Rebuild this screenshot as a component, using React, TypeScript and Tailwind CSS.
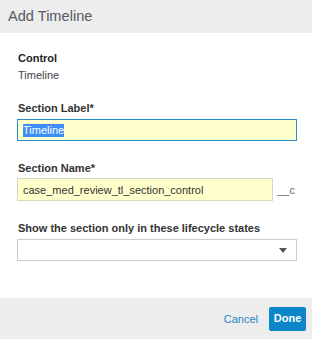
const App = () => {
  return (
    <div className="w-[312px] h-[339px] flex flex-col bg-white font-['Liberation_Sans',Arial,sans-serif]">
      <div className="h-[33px] bg-[#ededed] flex items-center px-[8px] shrink-0">
        <h1 className="text-[14.6px] text-[#555b63] leading-none">Add Timeline</h1>
      </div>

      <div className="flex-1 px-[17px] pt-[18px]">
        <div className="text-[11px] leading-[14px] font-bold text-[#222] pl-px">Control</div>
        <div className="text-[11px] leading-[14px] text-[#444] mt-[3px] pl-px">Timeline</div>

        <div className="text-[11px] leading-[14px] font-bold text-[#333] mt-[19px] pl-px">Section Label*</div>
        <div className="mt-[4px] h-[22px] w-[280px] border border-[#2a8bd0] bg-[#ffffcc] flex items-center px-[5px]">
          <span className="text-[11px] leading-[13px] bg-[#3d8ef8] text-white">Timeline</span>
        </div>

        <div className="text-[11px] leading-[14px] font-bold text-[#333] mt-[20px] pl-px">Section Name*</div>
        <div className="mt-[3px] flex items-center">
          <div className="h-[23px] w-[258px] border border-[#d8d8c0] bg-[#ffffcc] flex items-center px-[5px]">
            <span className="text-[11px] leading-[14px] text-[#333]">case_med_review_tl_section_control</span>
          </div>
          <span className="ml-[4px] text-[11px] leading-[14px] text-[#666]">__c</span>
        </div>

        <div className="text-[11px] leading-[14px] font-bold text-[#333] mt-[20px] pl-px">Show the section only in these lifecycle states</div>
        <div className="mt-[4px] h-[22px] w-[280px] border border-[#cccccc] bg-white flex items-center justify-end pr-[9px]">
          <svg width="8" height="5" viewBox="0 0 8 5">
            <path d="M0 0 L8 0 L4 5 Z" fill="#555" />
          </svg>
        </div>
      </div>

      <div className="h-[41px] bg-[#ededed] shrink-0 flex items-center justify-end pr-[6px] gap-[11px]">
        <button className="text-[11px] leading-[14px] text-[#1b87c9]">Cancel</button>
        <button className="h-[24px] w-[37px] rounded-[2px] bg-[#0b86c8] text-white text-[11px] font-bold leading-none">Done</button>
      </div>
    </div>
  );
};

export default App;
